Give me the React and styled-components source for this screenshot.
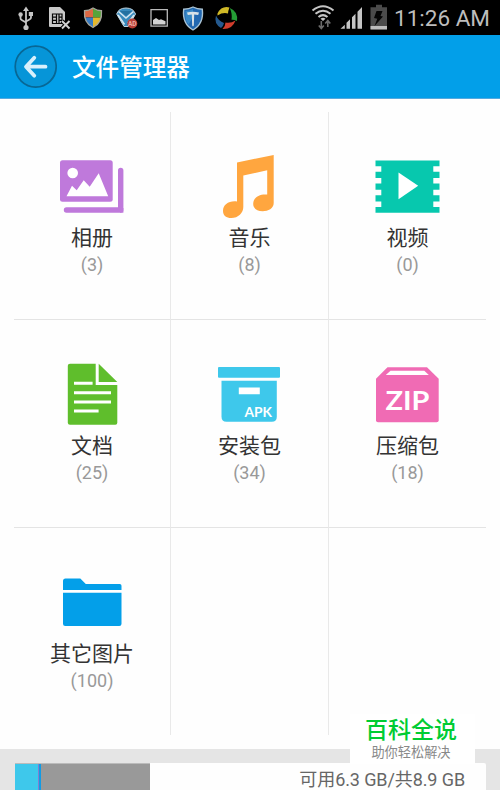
import React from "react";
import styled, { createGlobalStyle } from "styled-components";

const Global = createGlobalStyle`
  * { box-sizing: border-box; }
  body { margin: 0; background: #fefefe; font-family: Roboto, "Noto Sans CJK SC", sans-serif; }
`;

const Screen = styled.div`
  width: 500px;
  height: 790px;
  display: flex;
  flex-direction: column;
  overflow: hidden;
  background: #fefefe;
`;
const StatusBar = styled.div`
  height: 35px;
  flex: none;
  display: flex;
  background: #000;
  padding: 0 10px 0 10px;
`;
const Spacer = styled.div`
  flex: 1;
`;
const Clock = styled.div`
  width: 97px;
  color: #bdbdbd;
  font-size: 22.5px;
  line-height: 36px;
  text-align: right;
  white-space: nowrap;
`;
const Header = styled.header`
  height: 64px;
  flex: none;
  display: flex;
  align-items: center;
  padding-left: 14px;
  gap: 15px;
  background: #029fe9;
  border-bottom: 1px solid #55a9df;
`;
const BackButton = styled.button`
  width: 43px;
  height: 43px;
  padding: 0;
  border: 0;
  background: none;
  svg { display: block; }
`;
const Title = styled.h1`
  margin: 2px 0 0;
  color: #fff;
  font-size: 23.6px;
  font-weight: 500;
  line-height: 34px;
`;
const Grid = styled.main`
  height: 623px;
  flex: none;
  margin: 13px 14px 14px;
  display: grid;
  grid-template-columns: 157px 158px 157px;
  grid-template-rows: 208px 208px 207px;
`;
const Tile = styled.div`
  display: flex;
  flex-direction: column;
  align-items: center;
  padding-top: 41px;
  border-right: ${(p) => (p.$lastCol ? "0" : "1px")} solid #e9e9e9;
  border-bottom: ${(p) => (p.$lastRow ? "0" : "1px")} solid #e4e4e4;
`;
const Icon = styled.svg`
  width: 70px;
  height: 66px;
  flex: none;
`;
const Label = styled.div`
  margin-top: 5px;
  height: 28px;
  color: #333;
  font-size: 21px;
  line-height: 28px;
`;
const Count = styled.div`
  color: #999;
  font-size: 18px;
  line-height: 25px;
`;
const Footer = styled.footer`
  position: relative;
  flex: 1;
  padding: 14px 14px 0 15px;
  background: #e5e5e5;
`;
const Storage = styled.div`
  height: 30px;
  display: flex;
  background: #fefefe;
  border-radius: 2px;
`;
const Segment = styled.div`
  width: ${(p) => p.$w}px;
  background: ${(p) => p.$color};
  border-top: 1px solid #bbb;
`;
const StorageText = styled.div`
  flex: 1;
  padding-right: 21px;
  text-align: right;
  color: #666;
  font-size: 18px;
  letter-spacing: -0.1px;
  line-height: 33px;
`;
const Watermark = styled.div`
  position: absolute;
  left: 350px;
  top: -35px;
  width: 125px;
  height: 50px;
  background: #fff;
  display: flex;
  flex-direction: column;
  align-items: center;
  padding-right: 3px;
`;
const Brand = styled.div`
  color: #00cc33;
  font-size: 23px;
  font-weight: 500;
  line-height: 34px;
`;
const Slogan = styled.div`
  color: #888;
  font-size: 13.2px;
  line-height: 9px;
  white-space: nowrap;
`;

const StatusIcon = ({ x, w, children }) => (
  <svg width={w} height="35" viewBox={`${x} 0 ${w} 35`}>{children}</svg>
);

const StatusIcons = () => (
  <>
    <StatusIcon x={10} w={34}>
      <g fill="none" stroke="#c4c4c4" strokeWidth="1.8">
        <path d="M26 9v18M20.5 15v3.2q0 1.2 1.2 1.8l4.3 2.5M31 14v3.5q0 1.2-1.2 1.8L26 21.5" />
      </g>
      <path d="M26 6.5l3 4.5h-6zM28.8 12h4.2v4h-4.2z" fill="#c4c4c4" />
      <circle cx="20.6" cy="14.5" r="2.2" fill="#c4c4c4" />
      <circle cx="26" cy="27.5" r="2.6" fill="#c4c4c4" />
    </StatusIcon>
    <StatusIcon x={44} w={34}>
      <path d="M50 7h10l5 5v8l-3 7H50q-1 0-1-1V8q0-1 1-1z" fill="#c9c9c9" />
      <path d="M52.5 14h9.5v9.5h-9.5zM52.5 17.2h4M52.5 20.4h4M58.5 17.2h3.5M58.5 20.4h3.5M56.5 14v3.2M56.5 17.2v6.3M59 14v9.5" fill="none" stroke="#050505" strokeWidth="1.2" />
      <path d="M62 21l7.5 7.5M69.5 21L62 28.5" stroke="#000" strokeWidth="4" />
      <path d="M62 21l7.5 7.5M69.5 21L62 28.5" stroke="#d2d2d2" strokeWidth="1.9" />
    </StatusIcon>
    <StatusIcon x={78} w={32}>
      <clipPath id="shield"><path d="M93 8q4 2.6 8.5 2.7Q102.5 23 93 27.5 83.5 23 84.5 10.7 89 10.6 93 8z" /></clipPath>
      <g clipPath="url(#shield)">
        <path d="M83 7h10v10.5H83z" fill="#dd6843" />
        <path d="M93 7h10v10.5H93z" fill="#57a43b" />
        <path d="M83 17.5h10V29H83z" fill="#387bc2" />
        <path d="M93 17.5h10V29H93z" fill="#e4b82c" />
      </g>
      <path d="M93 8q4 2.6 8.5 2.7Q102.5 23 93 27.5 83.5 23 84.5 10.7 89 10.6 93 8z" fill="none" stroke="#a5a59b" strokeWidth="1.3" />
    </StatusIcon>
    <StatusIcon x={110} w={35}>
      <path d="M116.7 14q2-6 9.3-6t9.5 6l-7 12.5h-4.5z" fill="#378abd" stroke="#bed3df" strokeWidth="1" />
      <path d="M118.5 11.5l7.5 6.5 7.5-6.5M118 15l6.5 9.5M134 15l-6 8" fill="none" stroke="#d4e5ee" strokeWidth="1.6" />
      <path d="M120 11h12l-6 5z" fill="#2471a0" />
      <circle cx="132.3" cy="23.5" r="5" fill="#b83e35" />
      <text x="132.3" y="26" textAnchor="middle" fontSize="6.5" fontWeight="700" fill="#e6aaa2">AD</text>
    </StatusIcon>
    <StatusIcon x={145} w={30}>
      <path d="M151 9.7h16.3v16.5H151z" fill="none" stroke="#b9b9b9" strokeWidth="1.3" />
      <path d="M153 24.5v-4.5l3-2 3 2 2-.8 4.500 2v3.300z" fill="#d2d2d2" />
    </StatusIcon>
    <StatusIcon x={175} w={35}>
      <path d="M193 7q4 2.200 9.300 2.200Q204 24 193 30 182 24 183.700 9.200 189 9.200 193 7z" fill="#2268b1" stroke="#aac3d3" strokeWidth="1.400" />
      <path d="M193 9q-3 2-7.500 2-.8 10 3 13.500L193 17z" fill="#3889c7" />
      <path d="M187 12.500q6-1.500 12 0l-.8 2.500-4-.5-.4 11-.8 1-.8-1-.4-11-4 .5z" fill="#d8e1e7" />
    </StatusIcon>
    <StatusIcon x={210} w={35}>
      <path d="M217.500 13.500q4-8 12-6 -1.500 3.500-1.500 6-5-1.500-10.500 2z" fill="#d0b927" />
      <path d="M229.800 8q8.500 3.500 7.200 13-3-1.500-5.500-1.200 1-6-1.700-11.800z" fill="#249c35" />
      <path d="M235.500 20.500q-3 9-13 8.500 3-3 3-6.500 5.500 1 10-2z" fill="#cf3d2c" />
      <path d="M216 15.500q-2.500 8 5 12.500 2.500-2 3-5-5.500-2-8-7.500z" fill="#24598e" />
    </StatusIcon>
  </>
);

const SignalIcons = () => (
  <>
    <StatusIcon x={308} w={30}>
      <g fill="none" stroke="#c5c5c5" strokeWidth="2">
        <path d="M312.500 10.500q10.500-8.500 21 0M315.500 13.800q7.500-6.200 15 0M318.500 17q4.500-3.800 9 0" />
      </g>
      <path d="M320.500 18.700q2.500-2 5 0L323 21z" fill="#c5c5c5" />
      <path d="M321.300 21v7M318.800 25.500l2.500 3 2.500-3M327.800 27v-6M325.300 23.500l2.500-3 2.500 3" fill="none" stroke="#6b6b6b" strokeWidth="1.600" />
    </StatusIcon>
    <StatusIcon x={338} w={28}>
      <path d="M340.500 28.700l4.300-4v4zM346.500 22.800l3.500-3.500v9.400h-3.500zM352 17.300l3.500-3.500v14.900H352zM357.500 11.800l4.500-4.800v21.700h-4.500z" fill="#c5c5c5" />
    </StatusIcon>
    <StatusIcon x={366} w={27}>
      <path d="M376 4.800h6v2.500h5v22h-16.500v-22h5.500z" fill="#4b4b4b" />
      <path d="M376.500 11h6l-2 5 2.500.5-8.500 9.500 2.800-7.300-3.300-.7z" fill="#050505" />
      <path d="M370.500 26H387v3.500h-16.500z" fill="#bdbdbd" />
    </StatusIcon>
  </>
);

const tiles = [
  {
    name: "相册", count: 3, box: "57 153",
    art: (
      <>
        <rect x="60" y="160.300" width="52.700" height="41.400" rx="2.500" fill="#bf79db" />
        <circle cx="72.700" cy="173" r="5.300" fill="#fff" />
        <path d="M66.500 196.300l5.500-10.500 4.700 4.500 7-10 6 6.500 9-13.500 9.500 23z" fill="#fff" />
        <path d="M120.700 170.500v39.500M66.500 210h54.200" fill="none" stroke="#bf79db" strokeWidth="5.400" strokeLinecap="round" strokeLinejoin="round" />
        <path d="M120 208h3.400v4.700H120z" fill="#bf79db" />
      </>
    ),
  },
  {
    name: "音乐", count: 8, box: "215 153",
    art: <path d="M237 162.500L273.700 155v48c0 5.500-5.500 8.200-11 8.200s-9.500-2.700-9.500-7.200c0-7 7-10.300 14-9.500V170.300L243.300 175.500v31.500c0 6-5 11-12 11-5 0-8.300-2.500-8.300-7 0-6.500 6-10.500 14-9.500z" fill="#ffa63f" />,
  },
  {
    name: "视频", count: 0, box: "373 153",
    art: (
      <>
        <path d="M375.500 160.500h64v52.300h-64z" fill="#07c8ae" />
        <path d="M375 166.300h6.300v5.500H375zM375 178h6.300v5.500H375zM375 189.700h6.300v5.500H375zM375 201.400h6.300v5.500H375zM433.300 166.300h6.700v5.500h-6.700zM433.300 178h6.700v5.500h-6.700zM433.300 189.700h6.700v5.500h-6.700zM433.300 201.400h6.700v5.500h-6.700z" fill="#fefefe" />
        <path d="M398.500 172.500v26.800l19.700-13.500z" fill="#fff" />
      </>
    ),
  },
  {
    name: "文档", count: 25, box: "57 361",
    art: (
      <>
        <path d="M70 363.700h25.700v21.300h21.600v37.700q0 2-2 2H70q-2.200 0-2.200-2v-57q0-2 2.200-2zM98.700 363.700l18.600 18.300H98.700z" fill="#5fbe2c" />
        <path d="M74 383.300h18.600M74 392.700h37M74 402h37M74 411h24.600" stroke="#fff" strokeWidth="3" />
      </>
    ),
  },
  {
    name: "安装包", count: 34, box: "215 361",
    art: (
      <>
        <rect x="218" y="367" width="62" height="10.700" rx="1" fill="#3ec8eb" />
        <path d="M221.500 380.700h55.300v36q0 5-5 5h-45.300q-5 0-5-5z" fill="#3ec8eb" />
        <path d="M238.800 387.500h21v6.700h-21z" fill="#fff" />
        <text x="244.500" y="417" textLength="27.500" lengthAdjust="spacingAndGlyphs" fontFamily="Lato" fontWeight="700" fontSize="13" fill="#fff">APK</text>
      </>
    ),
  },
  {
    name: "压缩包", count: 18, box: "373 361",
    art: (
      <>
        <path d="M387.500 367.300h39.500l11.700 11.500v41.500q0 2-2 2h-58.700q-2 0-2-2v-41.500z" fill="#f06bb4" />
        <path d="M390.500 370.700h33.800l4.500 4.300h-43z" fill="#fff" />
        <text x="385.500" y="410" textLength="44" lengthAdjust="spacingAndGlyphs" fontFamily="Lato" fontWeight="700" fontSize="26" fill="#fff">ZIP</text>
      </>
    ),
  },
  {
    name: "其它图片", count: 100, box: "57 569",
    art: (
      <>
        <path d="M63 590v-9q0-2.500 2.500-2.500h14.800l5.500 5.500h34q1.700 0 1.700 1.700v4.300z" fill="#039fe9" />
        <path d="M63 592.700h58.500v31q0 2.300-2.200 2.300H65.200q-2.200 0-2.200-2.300z" fill="#039fe9" />
      </>
    ),
  },
  null,
  null,
];

export default function App() {
  return (
    <Screen>
      <Global />
      <StatusBar>
        <StatusIcons />
        <Spacer />
        <SignalIcons />
        <Clock>11:26 AM</Clock>
      </StatusBar>
      <Header>
        <BackButton aria-label="返回">
          <svg width="43" height="43" viewBox="14 45 43 43">
            <circle cx="35.700" cy="66.600" r="20.500" fill="#0695d8" stroke="#086795" strokeWidth="1.700" />
            <path d="M45.500 66.700H27M34.300 57.800L26 66.700l8.300 9" fill="none" stroke="#d9f0fc" strokeWidth="3.800" strokeLinecap="round" strokeLinejoin="round" />
          </svg>
        </BackButton>
        <Title>文件管理器</Title>
      </Header>
      <Grid>
        {tiles.map((t, i) => (
          <Tile key={i} $lastCol={i % 3 === 2} $lastRow={i > 5}>
            {t && (
              <>
                <Icon viewBox={`${t.box} 70 66`}>{t.art}</Icon>
                <Label>{t.name}</Label>
                <Count>({t.count})</Count>
              </>
            )}
          </Tile>
        ))}
      </Grid>
      <Footer>
        <Storage>
          <Segment $w={23} $color="#3ec8eb" />
          <Segment $w={1} $color="#817fd0" />
          <Segment $w={2} $color="#119be5" />
          <Segment $w={109} $color="#999" />
          <StorageText>可用6.3 GB/共8.9 GB</StorageText>
        </Storage>
        <Watermark>
          <Brand>百科全说</Brand>
          <Slogan>助你轻松解决</Slogan>
        </Watermark>
      </Footer>
    </Screen>
  );
}
